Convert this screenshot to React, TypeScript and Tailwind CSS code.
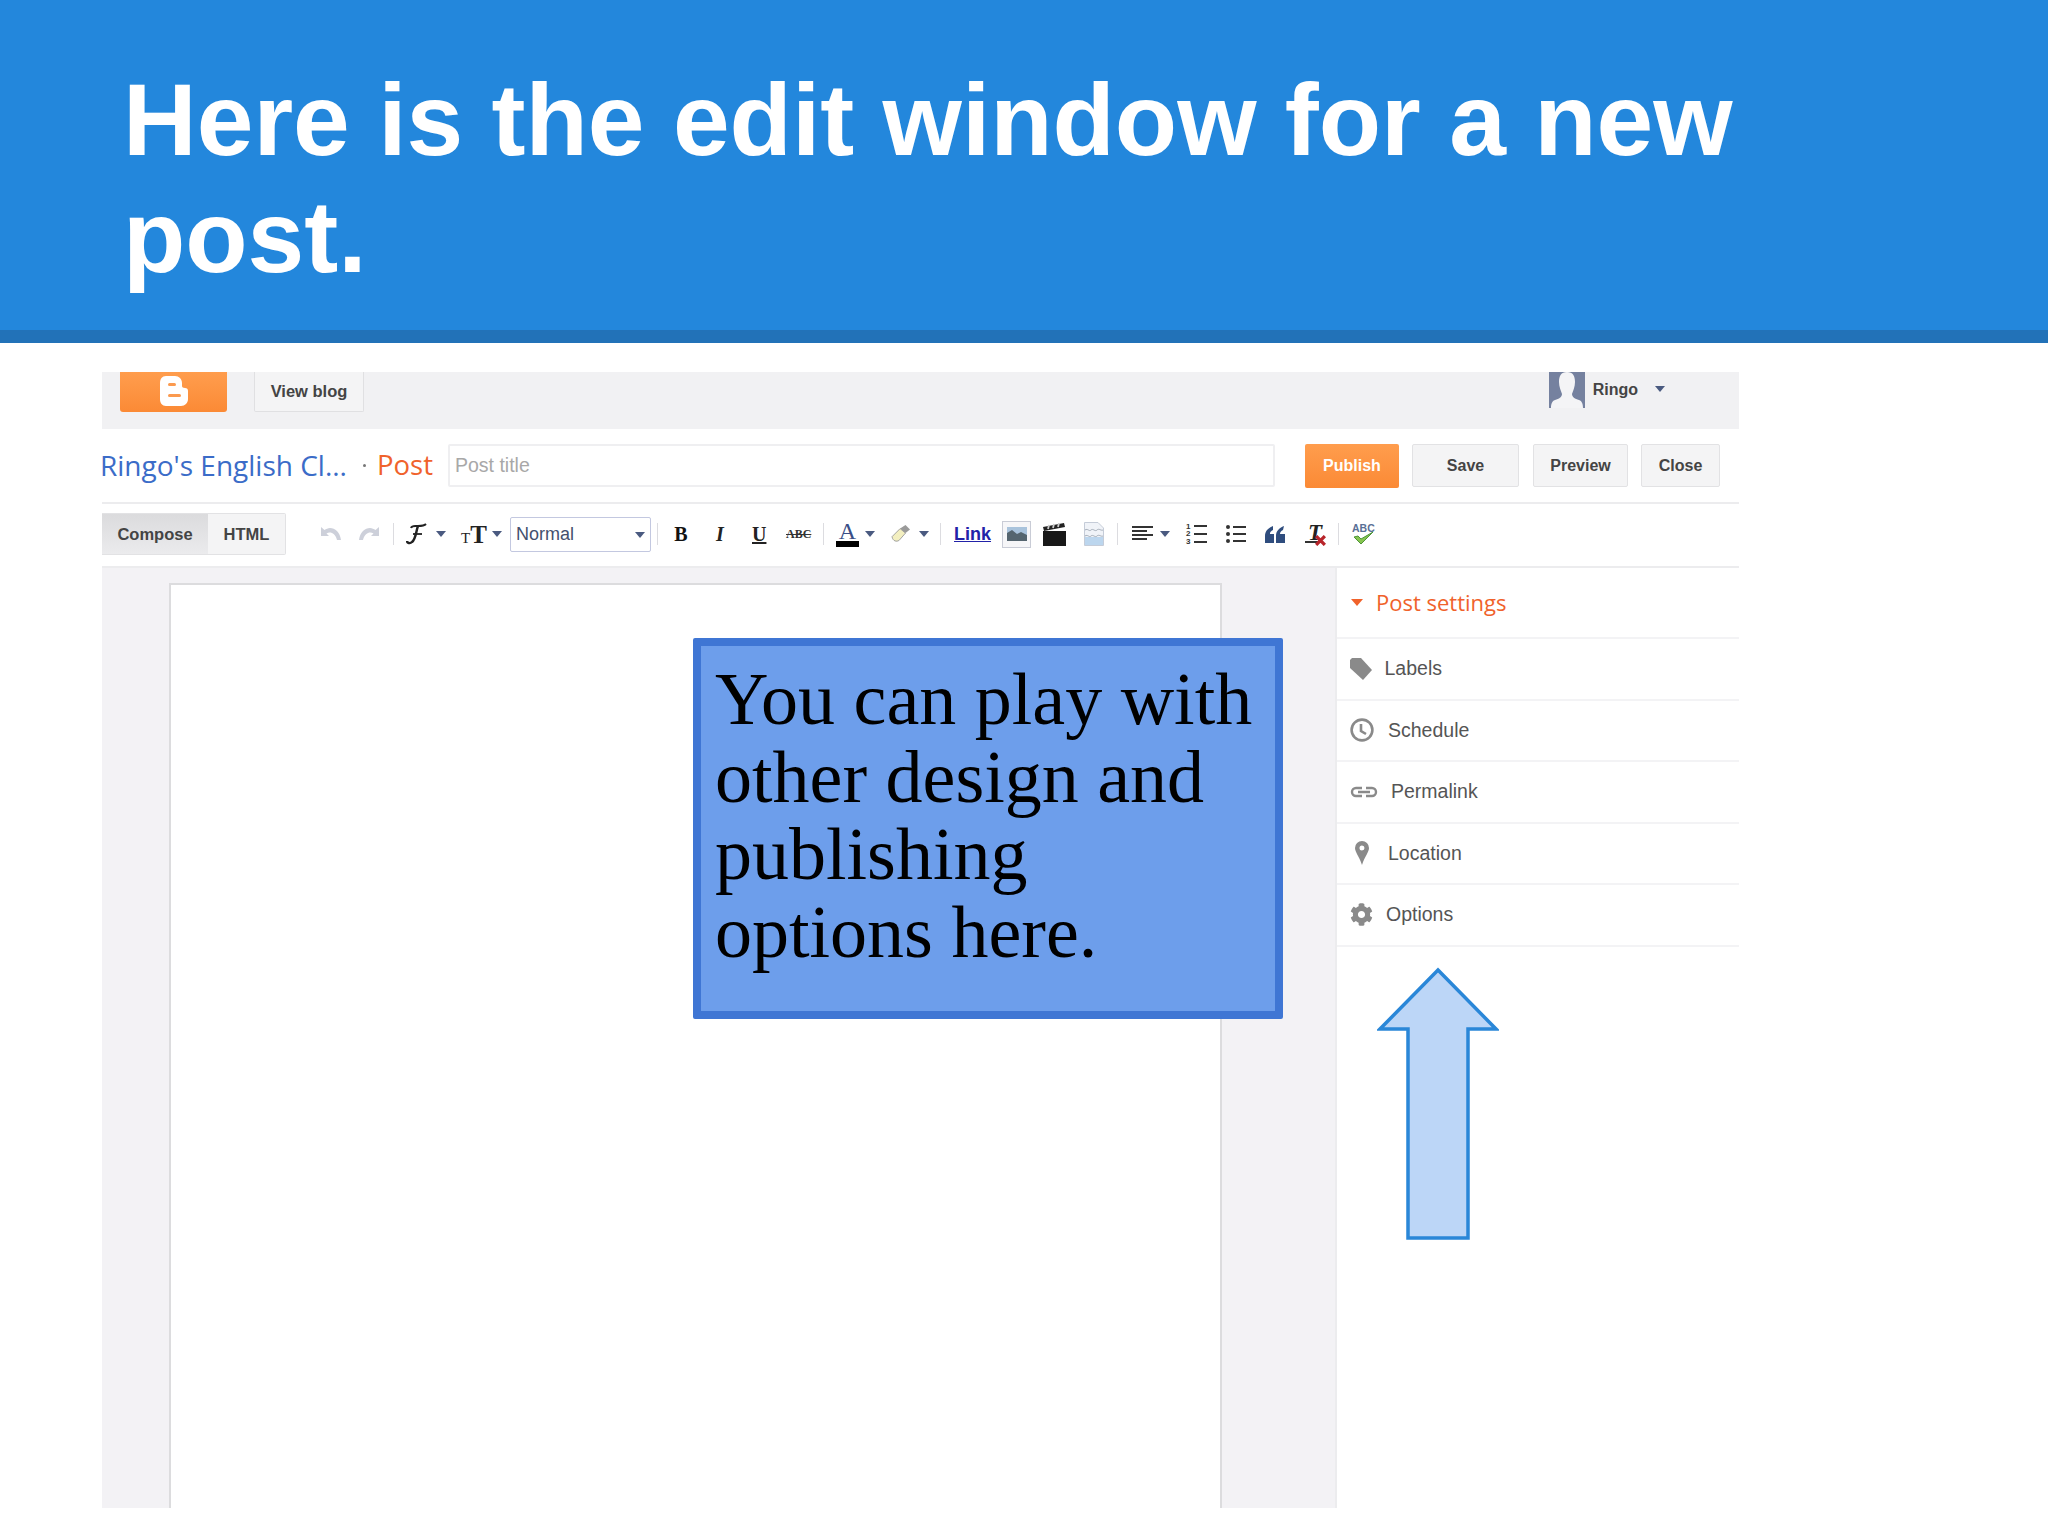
import { FaCog } from 'react-icons/fa'

const ui = "font-['Liberation_Sans',Arial,sans-serif]"
const open = "font-['Open_Sans',sans-serif]"
const serif = "font-['Liberation_Serif',serif]"

function Caret({ className = '' }: { className?: string }) {
  return (
    <svg viewBox="0 0 10 6" className={`w-[10px] h-[6px] shrink-0 ${className}`}>
      <path d="M0 0h10L5 6z" fill="#4a5a80" />
    </svg>
  )
}

function Sep({ className = '' }: { className?: string }) {
  return <div className={`w-px h-[22px] bg-[#dcdce0] shrink-0 ${className}`} />
}

function Button({ label, className }: { label: string; className: string }) {
  return (
    <div className={`h-[43px] flex items-center justify-center rounded-[2px] border border-[#e2e2e4] bg-[#f4f4f5] text-[#444] text-[16px] font-bold ${ui} ${className}`}>
      {label}
    </div>
  )
}

function SettingRow({ label, icon, textClass }: { label: string; icon: React.ReactNode; textClass: string }) {
  return (
    <div className="h-[61.5px] flex items-center border-b-2 border-[#f3f3f5] pl-[13px]">
      <div className="w-[28px] h-[28px] flex items-center justify-start shrink-0">{icon}</div>
      <span className={`text-[19.5px] text-[#555] ${ui} ${textClass}`}>{label}</span>
    </div>
  )
}

export default function App() {
  return (
    <div className="w-[2048px] h-[1536px] bg-white overflow-hidden">
      <header className="h-[343px] bg-[#2387dc] border-b-[13px] border-[#2272b8] pl-[123px] pt-[62px]">
        <h1 className={`text-[102px] leading-[117px] font-bold text-white w-[1700px] ${ui}`}>
          Here is the edit window for a new post.
        </h1>
      </header>

      <div className="relative mt-[29px] ml-[102px] w-[1637px] h-[1136px]">
        {/* top bar */}
        <div className="h-[57px] bg-[#f1f1f3] flex items-start pl-[18px]">
          <div className="w-[107px] h-[40px] rounded-b-[3px] bg-gradient-to-b from-[#ff9d4d] to-[#fb8a35] flex items-center justify-center">
            <svg viewBox="0 0 30 32" className="w-[30px] h-[32px] mt-[-2px]">
              <path d="M7 1h9c4 0 7 3 7 7v3c0 1 1 2 3 2s3 1 3 3v8c0 4-3 7-7 7H7c-4 0-6-3-6-7V8c0-4 2-7 6-7z" fill="#fff" />
              <rect x="9" y="8" width="8" height="3" rx="1.5" fill="#fb9a4f" />
              <rect x="9" y="19" width="13" height="3" rx="1.5" fill="#fb9a4f" />
            </svg>
          </div>
          <div className={`ml-[27px] w-[110px] h-[40px] flex items-center justify-center rounded-b-[2px] border border-t-0 border-[#e0e0e2] bg-[#f4f4f5] text-[16.5px] font-bold text-[#444] ${ui}`}>
            View blog
          </div>
          <div className="ml-auto mr-[74px] flex items-start">
            <svg viewBox="0 0 36 36" className="w-[36px] h-[36px]">
              <rect width="36" height="36" fill="#75819f" />
              <path d="M18 0c6 0 8 4 8 10 0 5-2 9-3 12 0 3 3 5 7 6 3 1 4 4 4 8H2c0-4 1-7 4-8 4-1 7-3 7-6-1-3-3-7-3-12 0-6 2-10 8-10z" fill="#f4f4f6" />
            </svg>
            <span className={`ml-[8px] mt-[6px] text-[16px] font-bold text-[#444] ${ui}`}>Ringo</span>
            <Caret className="ml-[17px] mt-[14px]" />
          </div>
        </div>

        {/* title row */}
        <div className="h-[75px] border-b-2 border-[#ececee] flex items-center">
          <span className={`w-[248px] -ml-[2px] -mt-[2px] text-[28px] whitespace-nowrap text-[#3b6cc8] ${open}`}>Ringo's English Cl...</span>
          <span className="ml-[15px] w-[3px] h-[3px] bg-[#777] rounded-full" />
          <span className={`ml-[11px] -mt-[2px] text-[27.5px] text-[#f0622b] ${open}`}>Post</span>
          <div className={`ml-[15px] w-[827px] h-[43px] flex items-center pl-[5px] border-2 border-[#efeff1] rounded-[2px] text-[19.5px] text-[#a8a8a8] ${ui}`}>
            Post title
          </div>
          <div className={`ml-[30px] w-[94px] h-[44px] rounded-[2px] bg-gradient-to-b from-[#ff9d4d] to-[#fb8a35] flex items-center justify-center text-white text-[16px] font-bold ${ui}`}>
            Publish
          </div>
          <Button label="Save" className="ml-[13px] w-[107px]" />
          <Button label="Preview" className="ml-[14px] w-[95px]" />
          <Button label="Close" className="ml-[13px] w-[79px]" />
        </div>

        {/* toolbar */}
        <div className="h-[64px] border-b-2 border-[#ececee] pb-[2px] flex items-center">
          <div className={`flex h-[42px] w-[184px] rounded-r-[2px] border border-l-0 border-[#e2e2e4] text-[16.5px] font-bold text-[#444] ${ui}`}>
            <div className="w-[106px] flex items-center justify-center bg-gradient-to-b from-[#dbdbdd] to-[#ebebed]">Compose</div>
            <div className="flex-1 flex items-center justify-center bg-[#f4f4f5]">HTML</div>
          </div>

          <svg viewBox="0 0 22 14" className="ml-[34px] w-[22px] h-[14px] shrink-0">
            <path d="M1 0v9h8L6.5 6.5C10 4.500 15 5.500 17 13h4C20 5 15 1 10 1 8 1 6 2 4.500 3z" fill="#cdd0da" />
          </svg>
          <svg viewBox="0 0 22 14" className="ml-[16px] w-[22px] h-[14px] shrink-0">
            <path d="M21 0v9h-8l2.500-2.500C12 4.500 7 5.500 5 13H1C2 5 7 1 12 1c2 0 4 1 5.500 2z" fill="#cdd0da" />
          </svg>
          <Sep className="ml-[13px]" />
          <svg viewBox="0 0 21 22" className="ml-[12px] w-[21px] h-[22px] shrink-0" fill="none" stroke="#222">
            <path d="M5 5C6 2 9 3 12 3s6 0 8-2" strokeWidth="2" />
            <path d="M12 3C10 8 10 16 6 19c-2 2-5 1-5-1" strokeWidth="2.4" />
            <path d="M7 11h9" strokeWidth="1.8" />
          </svg>
          <Caret className="ml-[9px]" />
          <span className={`ml-[15px] w-[23px] whitespace-nowrap leading-none text-[#222] font-bold ${serif}`}>
            <span className="text-[15px] font-normal">T</span>
            <span className="text-[25px] tracking-tight">T</span>
          </span>
          <Caret className="ml-[8px]" />
          <div className={`ml-[8px] w-[141px] h-[35px] flex items-center justify-between pl-[5px] pr-[5px] border border-[#c3c8e0] rounded-[2px] bg-white text-[18px] text-[#44506e] ${ui}`}>
            Normal
            <Caret className="mt-[2px]" />
          </div>
          <Sep className="ml-[6px]" />
          <span className={`ml-[16px] w-[14px] text-[20px] font-bold text-[#111] text-center ${serif}`}>B</span>
          <span className={`ml-[25px] w-[14px] text-[20px] font-bold italic text-[#222] text-center ${serif}`}>I</span>
          <span className={`ml-[25px] w-[14px] text-[20px] font-bold underline text-[#222] text-center ${serif}`}>U</span>
          <span className={`ml-[20px] w-[25px] text-[12px] font-bold line-through text-[#333] text-center whitespace-nowrap ${serif}`}>ABC</span>
          <Sep className="ml-[12px]" />
          <div className="ml-[12px] w-[23px] flex flex-col items-center shrink-0">
            <span className={`text-[24px] leading-[19px] text-[#3b4f87] ${serif}`}>A</span>
            <div className="w-[23px] h-[6px] bg-black" />
          </div>
          <Caret className="ml-[6px]" />
          <svg viewBox="0 0 22 20" className="ml-[16px] w-[20px] h-[18px] shrink-0">
            <path d="M1 13 10 4l6 5-7 8c-3 2-7 1-8-4z" fill="#f3efc0" stroke="#999" />
            <path d="M10 4l6-4 5 5-5 4z" fill="#9a9a9a" />
          </svg>
          <Caret className="ml-[8px]" />
          <Sep className="ml-[11px]" />
          <span className={`ml-[13px] w-[35px] text-[18px] font-bold underline text-[#2222a8] ${ui}`}>Link</span>
          <div className="ml-[13px] w-[29px] h-[27px] shrink-0 border border-[#c9ccd6] bg-[#f6f6f8] flex items-center justify-center">
            <svg viewBox="0 0 20 14" className="w-[20px] h-[14px]">
              <rect width="20" height="14" fill="#a9c3dc" />
              <path d="M0 14V6l5-3 5 4 4-2 6 3v6z" fill="#55656f" />
            </svg>
          </div>
          <svg viewBox="0 0 23 23" className="ml-[12px] w-[23px] h-[23px] shrink-0">
            <rect x="0" y="8" width="23" height="15" fill="#181818" />
            <path d="M0 4 21 0l1 4L1 8z" fill="#222" />
            <path d="M5 6 6 2M10 5l1-4M15 4l1-4" stroke="#ccc" strokeWidth="1.8" />
          </svg>
          <svg viewBox="0 0 20 24" className="ml-[18px] w-[20px] h-[24px] shrink-0">
            <path d="M.5.5H14L19.500 6v17.500H.5z" fill="#f0f3f8" stroke="#c5ccd8" />
            <path d="M1 15h18v8H1z" fill="#bcd6ee" />
            <path d="M1 8c3-2 4 2 6 0s4 2 6 0 4 1 6 0M1 14c3-2 4 2 6 0s4 2 6 0 4 1 6 0" stroke="#a5aeb9" fill="none" />
          </svg>
          <Sep className="ml-[13px]" />
          <svg viewBox="0 0 21 17" className="ml-[14px] w-[21px] h-[17px] shrink-0">
            <path d="M0 1h21M0 5h15M0 9h21M0 13h15" stroke="#333" strokeWidth="2" />
          </svg>
          <Caret className="ml-[7px]" />
          <div className="ml-[16px] w-[21px] h-[22px] flex items-center gap-[3px] shrink-0">
            <span className={`w-[5px] text-[8px] leading-[7.500px] font-bold text-[#333] ${ui}`}>1 2 3</span>
            <svg viewBox="0 0 13 22" className="w-[13px] h-[22px]">
              <path d="M0 3h13M0 11h13M0 19h13" stroke="#333" strokeWidth="1.8" />
            </svg>
          </div>
          <svg viewBox="0 0 20 18" className="ml-[19px] w-[20px] h-[18px] shrink-0">
            <path d="M7 2h13M7 9h13M7 16h13" stroke="#333" strokeWidth="1.8" />
            <circle cx="2" cy="2" r="2" fill="#333" />
            <circle cx="2" cy="9" r="2" fill="#333" />
            <circle cx="2" cy="16" r="2" fill="#333" />
          </svg>
          <svg viewBox="0 0 20 17" className="ml-[19px] w-[20px] h-[17px] shrink-0">
            <path d="M8 0C3 2 0 5 0 10v7h9V8H5c0-2 1-3 3-4zM19 0c-5 2-8 5-8 10v7h9V8h-5c0-2 1-3 3-4z" fill="#2f4d7e" />
          </svg>
          <div className="ml-[20px] w-[20px] h-[21px] relative shrink-0">
            <span className={`text-[23px] leading-[18px] block font-bold italic text-[#222] text-center ${serif}`}>T</span>
            <div className="absolute left-0 right-[4px] top-[17px] h-[2px] bg-[#333]" />
            <svg viewBox="0 0 10 10" className="absolute right-[-1px] bottom-[-1px] w-[11px] h-[11px]">
              <path d="M1 1l8 8M9 1 1 9" stroke="#b8252b" strokeWidth="3" />
            </svg>
          </div>
          <Sep className="ml-[13px]" />
          <div className="ml-[13px] w-[22px] h-[22px] relative shrink-0">
            <span className={`absolute top-0 left-0 text-[10.5px] leading-none font-bold text-[#5a6f96] ${ui}`}>ABC</span>
            <svg viewBox="0 0 22 14" className="absolute left-0 top-[8px] w-[22px] h-[14px]">
              <path d="M2 6l7 7L21 1l-12 7-3-3z" fill="#86c44f" stroke="#4d9437" />
            </svg>
          </div>
        </div>

        {/* editor and settings */}
        <div className="h-[940px] flex">
          <div className="w-[1233px] bg-[#f3f2f5] pl-[67px] pt-[15px]">
            <div className="w-[1053px] h-[925px] bg-white border-2 border-b-0 border-[#dcdcde]" />
          </div>
          <aside className="flex-1 bg-white border-l-2 border-[#ececee]">
            <div className="h-[71px] flex items-center border-b-2 border-[#f3f3f5] pl-[14px]">
              <svg viewBox="0 0 12 7" className="w-[12px] h-[7px]">
                <path d="M0 0h12L6 7z" fill="#f0622b" />
              </svg>
              <span className={`ml-[13px] text-[22px] text-[#f0622b] ${open}`}>Post settings</span>
            </div>
            <SettingRow
              label="Labels"
              textClass="ml-[6.5px]"
              icon={
                <svg viewBox="0 0 22 22" className="w-[22px] h-[22px]">
                  <path d="M0 2 2 0h9l11 12-9 10L0 10z" fill="#8a8a8a" />
                </svg>
              }
            />
            <SettingRow
              label="Schedule"
              textClass="ml-[10px]"
              icon={
                <svg viewBox="0 0 24 24" className="w-[24px] h-[24px]" fill="none" stroke="#8a8a8a" strokeWidth="2.6">
                  <circle cx="12" cy="12" r="10.400" />
                  <path d="M11 6v7l5 3" />
                </svg>
              }
            />
            <SettingRow
              label="Permalink"
              textClass="ml-[13px]"
              icon={
                <svg viewBox="0 0 28 12" className="w-[28px] h-[12px]" fill="none" stroke="#8a8a8a" strokeWidth="2.4">
                  <path d="M12 2H6a4 4 0 0 0 0 8h6M16 2h6a4 4 0 0 1 0 8h-6M8 6h12" />
                </svg>
              }
            />
            <SettingRow
              label="Location"
              textClass="ml-[10px]"
              icon={
                <svg viewBox="0 0 14 24" className="w-[14px] h-[24px] ml-[5px]">
                  <path fillRule="evenodd" d="M7 0a7 7 0 0 1 7 7c0 4-4 8-7 17C4 15 0 11 0 7a7 7 0 0 1 7-7zm0 4.500a2.500 2.500 0 1 0 0 5 2.500 2.500 0 0 0 0-5z" fill="#8a8a8a" />
                </svg>
              }
            />
            <SettingRow label="Options" textClass="ml-[8px]" icon={<FaCog className="w-[23px] h-[23px] text-[#8a8a8a]" />} />
          </aside>
        </div>

        {/* callout */}
        <div className="absolute left-[591px] top-[266px] w-[590px] h-[381px] bg-[#6d9eeb] border-[8px] border-[#3f76d4] rounded-[2px] pl-[14px] pt-[15px]">
          <p className={`text-[74px] leading-[77.5px] text-black whitespace-nowrap ${serif}`}>
            You can play with
            <br />
            other design and
            <br />
            publishing
            <br />
            options here.
          </p>
        </div>

        {/* arrow */}
        <svg viewBox="0 0 122 274" className="absolute left-[1275px] top-[595px] w-[122px] h-[274px]">
          <path d="M61 3 119 62H91V271H31V62H3Z" fill="#bcd6f7" stroke="#2a87d8" strokeWidth="3.5" />
        </svg>
      </div>
    </div>
  )
}
